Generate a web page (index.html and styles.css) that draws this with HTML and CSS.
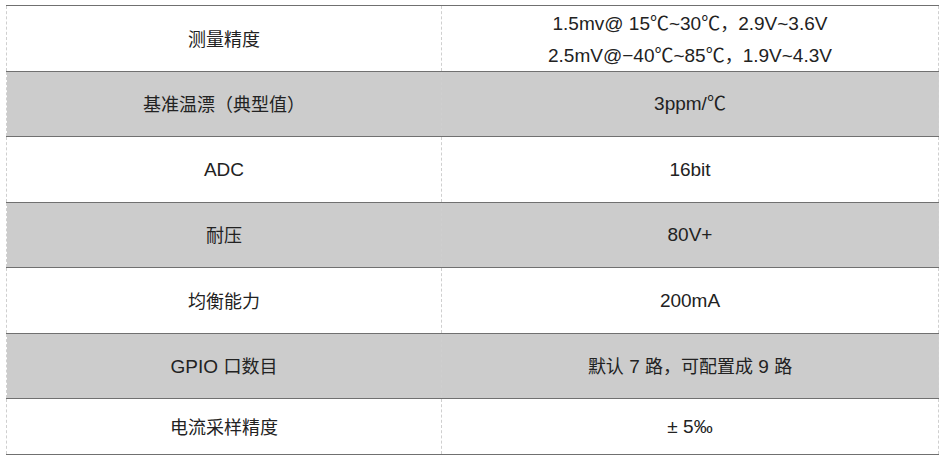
FILE: index.html
```html
<!DOCTYPE html>
<html lang="zh-CN">
<head>
<meta charset="utf-8">
<link rel="stylesheet" href="styles.css">
</head>
<body>
<table class="spec">
  <tr class="r">
    <td><span class="zh">测量精度</span></td>
    <td><div>1.5mv@ 15℃~30℃<span class="zh">，</span>2.9V~3.6V</div><div>2.5mV@−40℃~85℃<span class="zh">，</span>1.9V~4.3V</div></td>
  </tr>
  <tr class="r g">
    <td><span class="zh">基准温漂（典型值）</span></td>
    <td>3ppm/℃</td>
  </tr>
  <tr class="r">
    <td>ADC</td>
    <td>16bit</td>
  </tr>
  <tr class="r g">
    <td><span class="zh">耐压</span></td>
    <td>80V+</td>
  </tr>
  <tr class="r">
    <td><span class="zh">均衡能力</span></td>
    <td>200mA</td>
  </tr>
  <tr class="r g">
    <td>GPIO <span class="zh">口数目</span></td>
    <td><span class="zh">默认</span> 7 <span class="zh">路，可配置成</span> 9 <span class="zh">路</span></td>
  </tr>
  <tr class="r last">
    <td><span class="zh">电流采样精度</span></td>
    <td>± 5‰</td>
  </tr>
</table>
</body>
</html>
```

FILE: styles.css
```css
html, body {
  margin: 0;
  padding: 0;
  background: #ffffff;
}
body {
  padding: 5px 0 0 6px;
}
.spec {
  border-collapse: collapse;
  width: 933px;
  font-family: "Liberation Sans", "Noto Sans CJK SC", sans-serif;
  font-size: 19px;
  color: #222222;
}
.spec td {
  text-align: center;
  vertical-align: middle;
  padding: 0;
  line-height: 30px;
  border-top: 1px solid #707070;
  border-bottom: 1px solid #707070;
  border-left: 1px dashed #cfcfcf;
  border-right: 1px dashed #cfcfcf;
}
.spec td:first-child {
  width: 434px;
}
.zh {
  font-family: "Noto Sans CJK SC", sans-serif;
  font-size: 18px;
}
.r {
  height: 65px;
}
.r:nth-child(odd) {
  height: 66px;
}
.g td {
  background: #cccccc;
}
.r.last {
  height: 56px;
}
```
